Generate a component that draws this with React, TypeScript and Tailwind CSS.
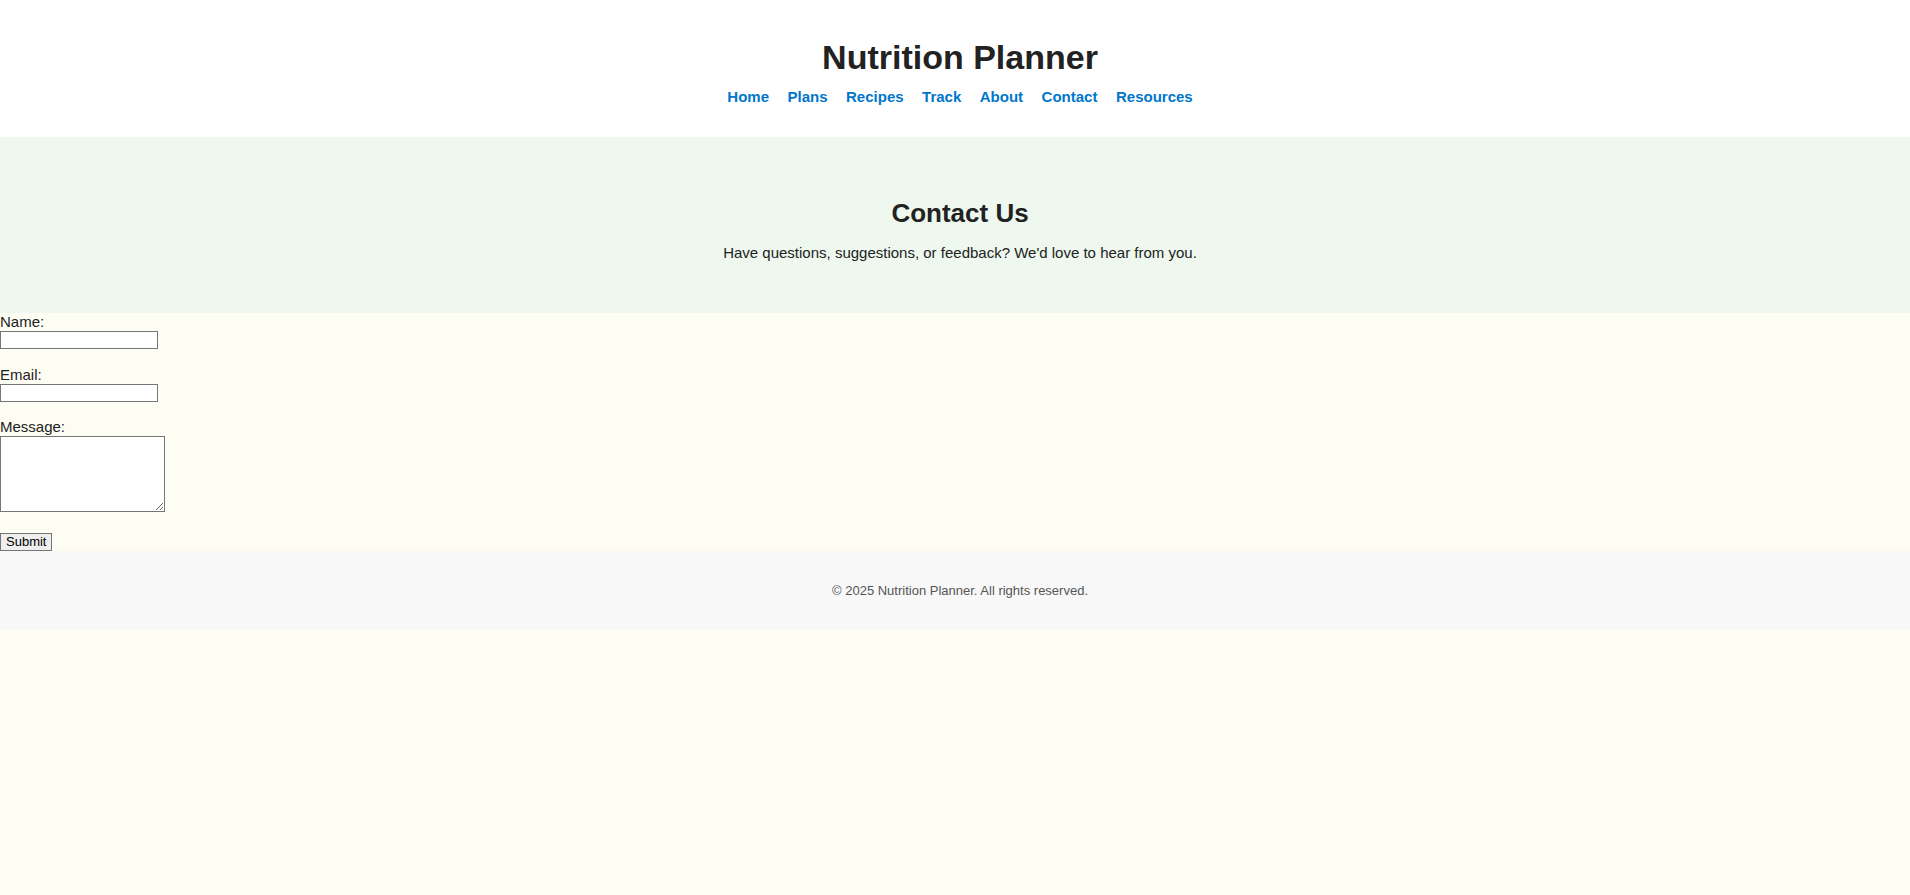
const links = ['Home', 'Plans', 'Recipes', 'Track', 'About', 'Contact', 'Resources'];

export default function App() {
  return (
    <div className="min-h-screen bg-[#fdfdf4] font-['Liberation_Sans',Arial,sans-serif] text-[#222]">
      {/* Header */}
      <header className="bg-white pt-[38px] pb-[32px] pl-[10px] text-center">
        <h1 className="text-[34px] leading-[39px] font-bold text-[#222]">Nutrition Planner</h1>
        <nav className="mt-[11px] flex justify-center gap-[18.5px]">
          {links.map((l) => (
            <a key={l} href="#" className="text-[15px] leading-[17px] font-bold text-[#0077cc]">
              {l}
            </a>
          ))}
        </nav>
      </header>

      {/* Hero */}
      <section className="bg-[#eef8ef] pt-[61px] pb-[52px] pl-[10px] text-center">
        <h2 className="text-[26px] leading-[30px] font-bold text-[#222]">Contact Us</h2>
        <p className="mt-[16px] text-[15px] leading-[17px] text-[#222]">
          Have questions, suggestions, or feedback? We'd love to hear from you.
        </p>
      </section>

      {/* Form */}
      <form className="flex flex-col items-start text-[15px] text-[#222]">
        <label htmlFor="name" className="block leading-[18px]">Name:</label>
        <input
          id="name"
          type="text"
          className="block h-[18px] w-[158px] border border-[#767676] bg-white px-[2px] text-[13px]"
        />
        <label htmlFor="email" className="mt-[17px] block leading-[18px]">Email:</label>
        <input
          id="email"
          type="email"
          className="block h-[18px] w-[158px] border border-[#767676] bg-white px-[2px] text-[13px]"
        />
        <label htmlFor="message" className="mt-[16px] block leading-[18px]">Message:</label>
        <textarea
          id="message"
          className="block h-[76px] w-[165px] border border-[#767676] bg-white p-[2px] font-mono text-[13px]"
        />
        <button
          type="submit"
          className="mt-[21px] h-[18px] border border-[#767676] bg-[#efefef] px-[5px] text-[13px] leading-[14px] text-black"
        >
          Submit
        </button>
      </form>

      {/* Footer */}
      <footer className="bg-[#f8f8f8] pt-[32px] pb-[32px] pl-[10px] text-center">
        <p className="text-[13px] leading-[15px] text-[#555]">© 2025 Nutrition Planner. All rights reserved.</p>
      </footer>
    </div>
  );
}
